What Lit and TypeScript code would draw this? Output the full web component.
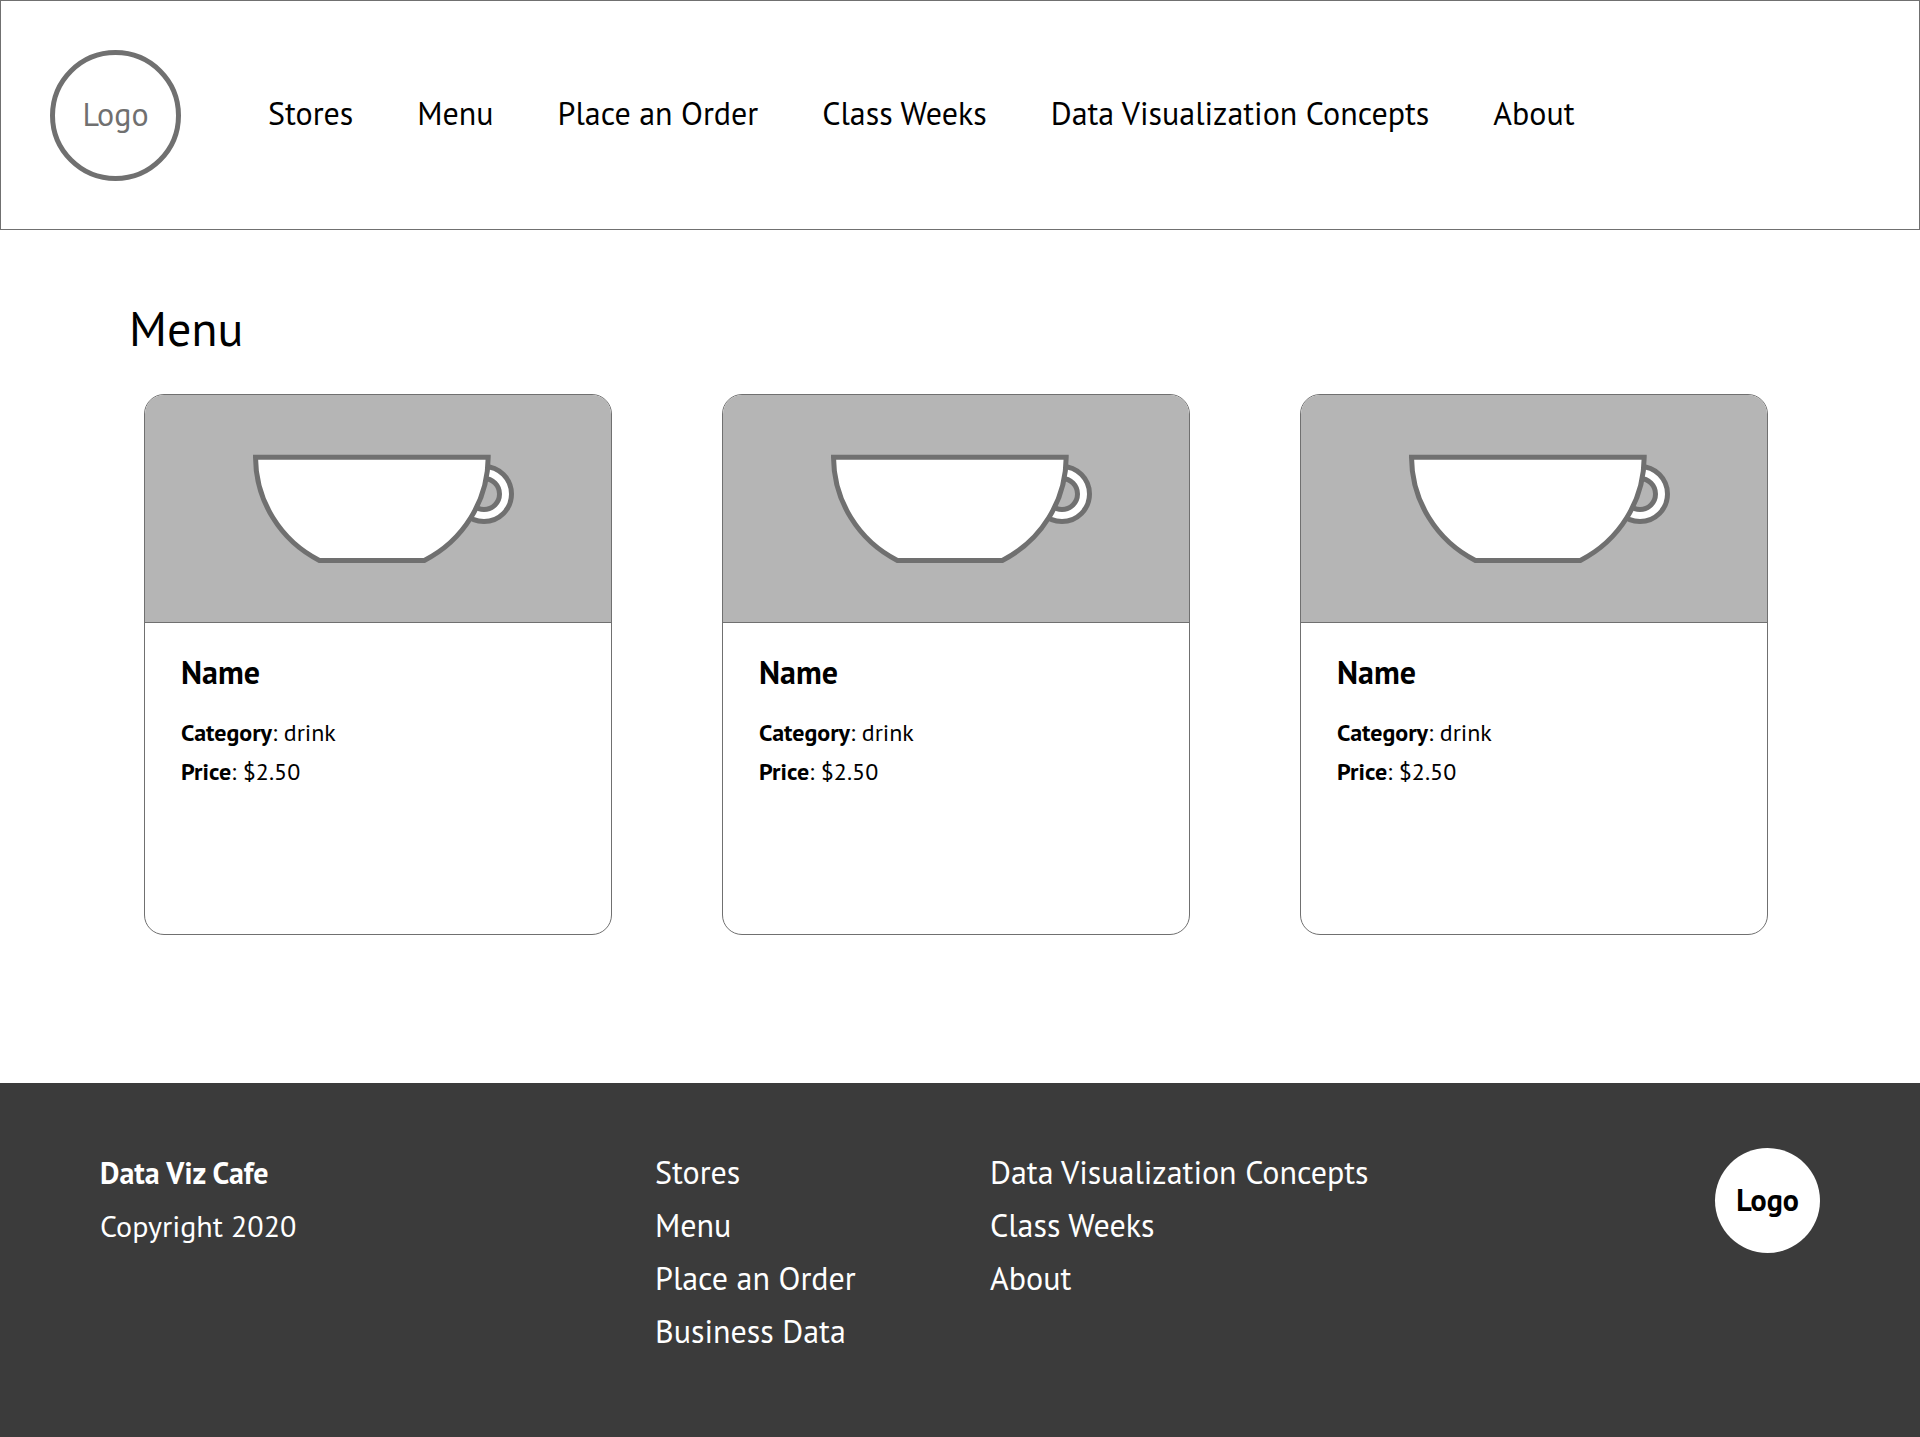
import { LitElement, html, css } from "lit";
import { customElement, property } from "lit/decorators.js";

interface MenuItem {
  name: string;
  category: string;
  price: string;
}

const NAV_LINKS = [
  "Stores",
  "Menu",
  "Place an Order",
  "Class Weeks",
  "Data Visualization Concepts",
  "About",
];

const FOOTER_LINKS = [
  ["Stores", "Menu", "Place an Order", "Business Data"],
  ["Data Visualization Concepts", "Class Weeks", "About"],
];

const ITEMS: MenuItem[] = [
  { name: "Name", category: "drink", price: "$2.50" },
  { name: "Name", category: "drink", price: "$2.50" },
  { name: "Name", category: "drink", price: "$2.50" },
];

const slug = (label: string) => `#${label.toLowerCase().replace(/ /g, "-")}`;

@customElement("menu-card")
export class MenuCard extends LitElement {
  @property({ attribute: false }) item!: MenuItem;

  static styles = css`
    :host {
      display: block;
    }
    .card {
      border: 1px solid #707070;
      border-radius: 20px;
      overflow: hidden;
      background: #fff;
    }
    .media {
      display: flex;
      justify-content: center;
      padding: 59px 0 58px;
      background: #b5b5b5;
      border-bottom: 1px solid #707070;
    }
    .cup {
      display: block;
      width: 262px;
      height: 110px;
      margin-left: 10px;
      fill: #fff;
      stroke: #707070;
      stroke-width: 5;
    }
    .hole {
      fill: #b5b5b5;
    }
    .body {
      box-sizing: border-box;
      min-height: 311px;
      padding: 29px 36px;
    }
    .name {
      margin: 0 0 21px;
      font-size: 32px;
      line-height: 40px;
      font-weight: 700;
    }
    .detail {
      margin: 0;
      font-size: 24px;
      line-height: 39px;
    }
  `;

  render() {
    return html`
      <article class="card">
        <div class="media">
          <svg class="cup" viewBox="0 0 262 110" aria-hidden="true">
            <circle cx="232" cy="40" r="27.5" />
            <circle class="hole" cx="232" cy="40" r="15.5" />
            <path d="M3.5 3.2H236.2A116.4 116.4 0 0 1 172.3 106.4H67.4A116.4 116.4 0 0 1 3.5 3.2Z" />
          </svg>
        </div>
        <div class="body">
          <h2 class="name">${this.item.name}</h2>
          <p class="detail"><b>Category</b>: ${this.item.category}</p>
          <p class="detail"><b>Price</b>: ${this.item.price}</p>
        </div>
      </article>
    `;
  }
}

@customElement("app-root")
export class AppRoot extends LitElement {
  static styles = css`
    :host {
      display: flex;
      flex-direction: column;
      min-height: 100vh;
      background: #fff;
      color: #000;
      font-family: "PT Sans", Lato, "Noto Sans", sans-serif;
      font-size: 32px;
    }
    a {
      color: inherit;
      text-decoration: none;
    }
    ul {
      margin: 0;
      padding: 0;
      list-style: none;
    }
    .header {
      display: flex;
      align-items: center;
      gap: 87px;
      padding: 49px 49px 48px;
      border: 1px solid #707070;
    }
    .logo {
      box-sizing: border-box;
      display: flex;
      flex: none;
      align-items: center;
      justify-content: center;
      padding-bottom: 3px;
      border-radius: 50%;
    }
    .logo-outline {
      width: 131px;
      height: 131px;
      border: 5px solid #707070;
      color: #707070;
    }
    .nav {
      display: flex;
      flex-wrap: wrap;
      column-gap: 64px;
      padding-bottom: 6px;
      line-height: 40px;
    }
    .main {
      padding: 70px 128px 148px 129px;
    }
    .title {
      margin: 0 0 38px;
      font-size: 48px;
      line-height: 56px;
      font-weight: 400;
    }
    .cards {
      display: grid;
      grid-template-columns: repeat(3, 1fr);
      gap: 110px;
      margin: 0 24px 0 15px;
    }
    .footer {
      box-sizing: border-box;
      display: grid;
      grid-template-columns: 555fr 335fr 725fr auto;
      flex: 1;
      align-items: start;
      padding: 63px 100px 79px;
      background: #3b3b3b;
      color: #fff;
      line-height: 53px;
    }
    .about {
      font-size: 30px;
    }
    .about p {
      margin: 0;
    }
    .logo-solid {
      width: 105px;
      height: 105px;
      margin-top: 2px;
      background: #fff;
      color: #000;
      font-size: 30px;
      font-weight: 700;
    }
  `;

  render() {
    return html`
      <header class="header">
        <a class="logo logo-outline" href="#home">Logo</a>
        <nav aria-label="Main">
          <ul class="nav">
            ${NAV_LINKS.map((l) => html`<li><a href=${slug(l)}>${l}</a></li>`)}
          </ul>
        </nav>
      </header>
      <main class="main">
        <h1 class="title">Menu</h1>
        <div class="cards">
          ${ITEMS.map((item) => html`<menu-card .item=${item}></menu-card>`)}
        </div>
      </main>
      <footer class="footer">
        <div class="about">
          <p><b>Data Viz Cafe</b></p>
          <p>Copyright 2020</p>
        </div>
        ${FOOTER_LINKS.map(
          (group) => html`<ul>
            ${group.map((l) => html`<li><a href=${slug(l)}>${l}</a></li>`)}
          </ul>`
        )}
        <a class="logo logo-solid" href="#home">Logo</a>
      </footer>
    `;
  }
}
